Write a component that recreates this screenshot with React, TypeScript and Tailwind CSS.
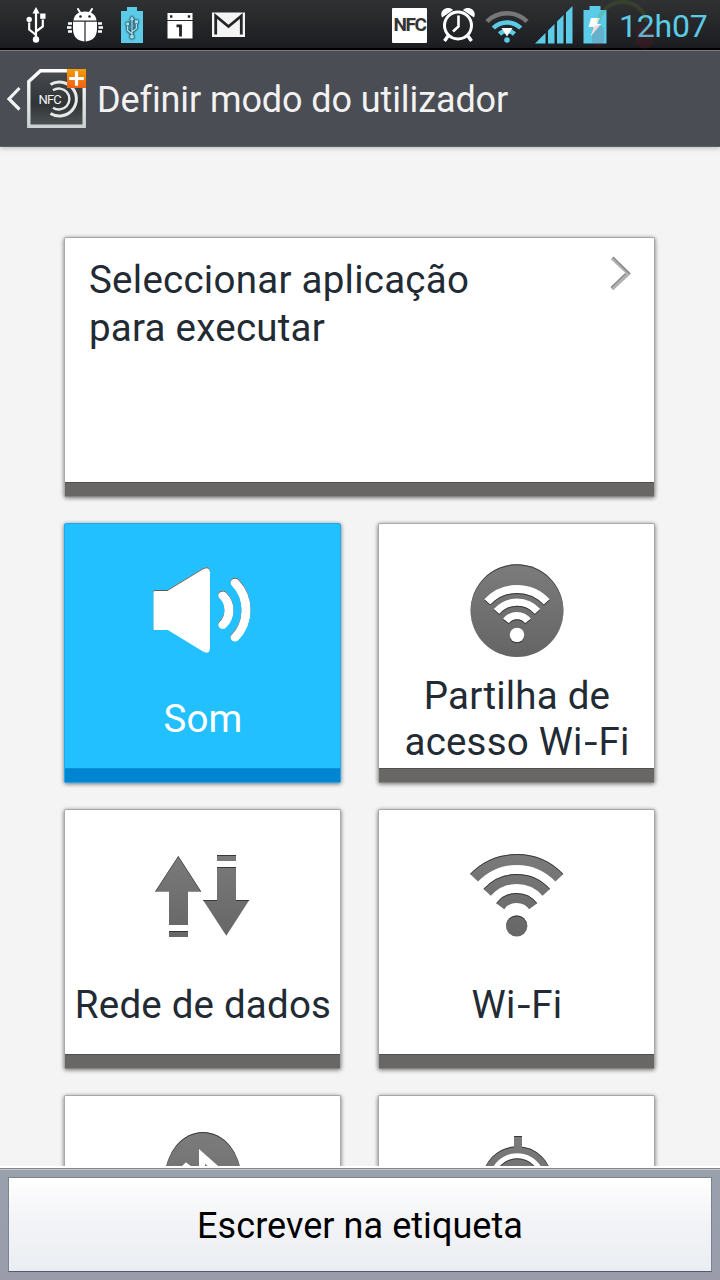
import React from 'react';

interface Tile {
    id: string;
    label?: string;
    icon: React.ReactNode;
    active?: boolean;
}

const UsbGlyph: React.FC<{ className?: string }> = ({ className }) => (
    <svg viewBox="0 0 20 36" className={className} fill="none" stroke="currentColor" strokeWidth="2.2">
        <path d="M10 4v28M10 28L3.2 22.5v-7M10 24.5l6.8-5v-7" />
        <path d="M10 0l3.6 6.5H6.4z" fill="currentColor" stroke="none" />
        <circle cx="10" cy="32.5" r="3.2" fill="currentColor" stroke="none" />
        <circle cx="3.2" cy="12.5" r="2.7" fill="currentColor" stroke="none" />
        <path d="M14.2 6.5h5.3v5.3h-5.3z" fill="currentColor" stroke="none" />
    </svg>
);

const BugIcon = () => (
    <svg viewBox="0 0 36 34" className="h-[34px] w-9" fill="#fff">
        <path d="M11 1l3 5M25 1l-3 5" stroke="#fff" strokeWidth="2" strokeLinecap="round" />
        <path d="M6.5 12.500C7 6.500 12 3.500 18 3.500S29 6.500 29.500 12.500z" />
        <circle cx="13.500" cy="8.500" r="1.300" fill="#222" />
        <circle cx="22.500" cy="8.500" r="1.300" fill="#222" />
        <path d="M6 13.800h11.400v19.700C10 33 6 28 6 21zM18.600 13.800H30V21c0 7-4 12-11.400 12.500z" />
        <path d="M1 15.500h4M0 19.500h4.500M1 23.500h4M31 15.500h4M31.500 19.500H36M31 23.500h4" stroke="#fff" strokeWidth="2.600" />
    </svg>
);

const CalendarIcon = () => (
    <svg viewBox="0 0 26 26" className="h-[26px] w-[26px]">
        <path d="M.5 0h25v7H.5zM.5 8h25v17.500H.5z" fill="#fff" />
        <path d="M3 2.300h2.400v2.400H3zM20.800 2.300h2.400v2.400h-2.400z" fill="#222" />
        <path d="M9.500 12.800h4V23.500" fill="none" stroke="#222" strokeWidth="2.800" />
    </svg>
);

const GmailIcon = () => (
    <svg viewBox="0 0 34 26" className="h-[26px] w-[34px]">
        <path d="M0 .5h33v24.500H0z" fill="#f4f4f4" />
        <path d="M3.700 22.500V4l12.800 10.500L29.300 4v18.500" fill="none" stroke="#242527" strokeWidth="2.800" />
    </svg>
);

const AlarmIcon = () => (
    <svg viewBox="0 0 36 36" className="h-9 w-9" fill="none" stroke="#fff">
        <circle cx="18" cy="18.500" r="13.500" strokeWidth="3" />
        <path d="M18.500 8.500v11l-5.500 5" strokeWidth="2.600" />
        <path d="M8 29l-3.500 5M28 29l3.500 5" strokeWidth="3.400" />
        <path d="M2 10.500C-1.500 3 8 -2 13 3zM34 10.500C37.500 3 28 -2 23 3z" fill="#fff" stroke="none" />
    </svg>
);

const StatusWifiIcon = () => (
    <svg viewBox="0 0 44 36" className="h-9 w-11" fill="none" strokeWidth="4.500">
        <path d="M2 14.500a28.500 28.500 0 0 1 40 0" stroke="#777" />
        <path d="M8.300 21a19.500 19.500 0 0 1 27.400 0" stroke="#5bcbe7" />
        <path d="M14.500 27a11 11 0 0 1 15 0" stroke="#5bcbe7" />
        <path d="M16.500 21h11L22 29.500z" fill="#fff" />
        <circle cx="22" cy="33" r="2.800" fill="#5bcbe7" />
    </svg>
);

const SignalIcon = () => (
    <svg viewBox="0 0 38 38" className="h-[38px] w-[38px]" fill="#5bcbe7">
        <path d="M0 37.500L10.500 27v10.500zM13 24.500l6.500-6.500v19.500H13zM22 15.500l6.500-6.500v28.500H22zM31 6.500L37.500 0v37.500H31z" />
    </svg>
);

const BatteryIcon = () => (
    <svg viewBox="0 0 24 38" className="h-[38px] w-6">
        <path d="M6.500 0h11v4H23.500v33.500H.5V4h6z" fill="#5bcbe7" />
        <path d="M8 12h9l-3 6h4L8 30l2.500-9H5.500z" fill="#fff" />
    </svg>
);

const Watermark = () => (
    <svg viewBox="0 0 150 60" className="pointer-events-none absolute top-0 right-0 z-20 h-[60px] w-[150px]">
        <path d="M28 22c3-12 13-20 25-20s21 8 24 20" fill="none" stroke="#5a8a20" strokeOpacity=".2" strokeWidth="4" />
        <path d="M22 28q6-6 12 0v14l-6 6-6-6zM66 28q8-6 17 0v16l-8 6-9-6z" fill="#a01020" fillOpacity=".14" />
    </svg>
);

const StatusBar = () => (
    <div className="relative flex h-[50px] shrink-0 items-center border-b-2 border-black bg-gradient-to-b from-[#303133] to-[#1c1d20] pt-0.5">
        <Watermark />
        <UsbGlyph className="ml-[26px] h-9 w-5 text-white" />
        <div className="ml-[21px]"><BugIcon /></div>
        <div className="ml-[18px] flex h-9 w-[22px] flex-col items-center">
            <div className="h-1 w-2.5 bg-[#5bcbe7]" />
            <div className="flex w-full flex-1 items-center justify-center bg-[#5bcbe7]">
                <UsbGlyph className="h-[23px] w-[14px] text-[#a5deee] [filter:drop-shadow(0_0_1px_#10303a)_drop-shadow(0_0_0.5px_#10303a)]" />
            </div>
        </div>
        <div className="ml-[24px] mt-0.5"><CalendarIcon /></div>
        <div className="ml-[19px]"><GmailIcon /></div>
        <div className="relative ml-auto flex items-center">
            <div className="flex h-[35px] w-[35px] items-center justify-center rounded-[1px] bg-white">
                <span className="font-[Roboto] text-[19px] font-bold tracking-[-1.4px] text-[#333]">NFC</span>
            </div>
            <div className="ml-[13px]"><AlarmIcon /></div>
            <div className="ml-[9px]"><StatusWifiIcon /></div>
            <div className="ml-[6px]"><SignalIcon /></div>
            <div className="ml-[10px]"><BatteryIcon /></div>
            <span className="ml-[12px] mr-[12px] mt-0.5 w-[89px] font-[Roboto] text-[32px] leading-none tracking-[-0.2px] text-[#5bcbe7]">12h07</span>
        </div>
    </div>
);

const AppIcon = () => (
    <svg viewBox="0 0 62 62" className="h-[62px] w-[62px]">
        <defs>
            <linearGradient id="paper" x1="0" y1="0" x2="0" y2="1">
                <stop offset="0" stopColor="#484c4f" />
                <stop offset=".6" stopColor="#303436" />
                <stop offset="1" stopColor="#4d5356" />
            </linearGradient>
            <linearGradient id="frame" x1="0" y1="0" x2="0" y2="1">
                <stop offset="0" stopColor="#ffffff" />
                <stop offset="1" stopColor="#ccd2d3" />
            </linearGradient>
            <linearGradient id="orange" x1="0" y1="0" x2="0" y2="1">
                <stop offset="0" stopColor="#f79b00" />
                <stop offset="1" stopColor="#ee6119" />
            </linearGradient>
        </defs>
        <path d="M2.800 13.500L14.500 2.800H58.200V58.200H2.800z" fill="url(#paper)" stroke="url(#frame)" strokeWidth="3.400" />
        <g fill="none" stroke="#e8eaea">
            <path d="M24.500 16.500a17 17 0 1 1 0 29" strokeWidth="3" />
            <path d="M27 22.300a10.500 10.500 0 1 1 0 17.400" strokeWidth="2.400" />
        </g>
        <text x="12.500" y="35.500" fontSize="13" fontFamily="Roboto, sans-serif" letterSpacing="-.8" fill="#f2f2f2" stroke="#33373a" strokeWidth="1" paintOrder="stroke">NFC</text>
        <path d="M41 1h19v19H41z" fill="url(#orange)" />
        <path d="M50.500 3.300v14.500M43.200 10.500h14.600" stroke="#fff" strokeWidth="3.200" />
    </svg>
);

const ActionBar = () => (
    <header className="relative z-10 flex h-[97px] shrink-0 items-center border-t border-[#7b7d80] border-b border-b-[#5d6064] bg-[#4a4d54] shadow-[0_1px_5px_rgba(0,0,0,0.25)]">
        <svg viewBox="0 0 15 26" className="ml-1.5 h-[26px] w-[15px]">
            <path d="M13.500 2L3 13l10.500 10.500" fill="none" stroke="#f2f2f2" strokeWidth="3.200" />
        </svg>
        <div className="ml-[5px]"><AppIcon /></div>
        <h1 className="mt-0.5 ml-[9px] font-[Roboto] text-[36px] leading-none tracking-[-0.1px] whitespace-nowrap text-[#f2f2f2]">
            Definir modo do utilizador
        </h1>
    </header>
);

// Shared gradient and inner top shadow used by every tile icon
const IconDefs = () => (
    <svg className="absolute h-0 w-0">
        <defs>
            <linearGradient id="grey" gradientUnits="userSpaceOnUse" x1="0" y1="8" x2="0" y2="98">
                <stop offset="0" stopColor="#7b7b7b" />
                <stop offset="1" stopColor="#656565" />
            </linearGradient>
            <filter id="inset" x="-20%" y="-20%" width="140%" height="140%" colorInterpolationFilters="sRGB">
                <feOffset in="SourceAlpha" dy="1.200" result="off" />
                <feGaussianBlur in="off" stdDeviation=".6" result="blur" />
                <feComposite in="SourceAlpha" in2="blur" operator="out" result="edge" />
                <feFlood floodColor="#222" floodOpacity=".75" />
                <feComposite in2="edge" operator="in" result="shade" />
                <feMerge>
                    <feMergeNode in="SourceGraphic" />
                    <feMergeNode in="shade" />
                </feMerge>
            </filter>
        </defs>
    </svg>
);

const TileIcon: React.FC<{ children: React.ReactNode }> = ({ children }) => (
    <svg viewBox="0.5 0 100 100" className="h-[100px] w-[100px]">
        <g filter="url(#inset)">{children}</g>
    </svg>
);

const SoundIcon = () => (
    <TileIcon>
        <path
            d="M2.300 32h12.500L50.500 10.200Q57.500 7 57.500 14V90q0 7-7 3.500L15.300 72h-13q-1.500 0-1.500-1.500v-37Q.8 32 2.300 32z"
            fill="#fff"
        />
        <g fill="none" stroke="#fff" strokeWidth="9.200" strokeLinecap="round">
            <path d="M70.200 37a20.200 20.200 0 0 1 0 29.300" />
            <path d="M82.500 24.300a39.400 39.400 0 0 1 0 54.700" />
        </g>
    </TileIcon>
);

const HotspotIcon = () => (
    <TileIcon>
        <mask id="hotspot">
            <path d="M0 0h100v100H0z" fill="#fff" />
            <g fill="none" stroke="#000">
                <path d="M20.800 43.900a40.500 40.500 0 0 1 59.400 0" strokeWidth="8" />
                <path d="M30 53.500a27.200 27.200 0 0 1 41 0" strokeWidth="7.300" />
                <path d="M39.500 63a13.900 13.900 0 0 1 22 0" strokeWidth="7.300" />
            </g>
            <circle cx="50.500" cy="77" r="7.300" fill="#000" />
        </mask>
        <circle cx="50.500" cy="52.700" r="46.400" fill="url(#grey)" mask="url(#hotspot)" />
    </TileIcon>
);

const DataIcon = () => (
    <TileIcon>
        <g fill="url(#grey)">
            <path d="M25.800 12l23 35.700H35.500V81h-19V47.700h-14z" />
            <path d="M16.500 87h19v6h-19zM64.500 11h19v6h-19z" />
            <path d="M64.500 23h19v33h13.300l-23 35.700L50.500 56h14z" />
        </g>
    </TileIcon>
);

const WifiIcon = () => (
    <TileIcon>
        <g fill="none" stroke="url(#grey)">
            <path d="M7.500 33.800a59 59 0 0 1 85.400 0" strokeWidth="11" />
            <path d="M20.600 48.400a39.500 39.500 0 0 1 59.200 0" strokeWidth="10" />
            <path d="M33.700 62.300a20.500 20.500 0 0 1 33 0" strokeWidth="10" />
        </g>
        <circle cx="50.200" cy="82" r="10.600" fill="url(#grey)" />
    </TileIcon>
);

const BluetoothIcon = () => (
    <TileIcon>
        <ellipse cx="50.500" cy="48" rx="38" ry="46" fill="url(#grey)" />
        <path
            d="M46.500 19L69 39 56 49l13 10-22.500 20V56L33 67l-4.500-4.500L43.500 49 28.500 37l5-4.700 13 10.200zM52.500 33.700v9L58 38.500zM52.500 56v10l5.500-5z"
            fill="#fff"
            fillRule="evenodd"
        />
    </TileIcon>
);

const LocationIcon = () => (
    <TileIcon>
        <circle cx="50.700" cy="51.300" r="31.500" fill="none" stroke="url(#grey)" strokeWidth="7" />
        <circle cx="50.700" cy="51.300" r="23" fill="url(#grey)" />
        <path d="M47.500 6h8v12h-8z" fill="url(#grey)" />
    </TileIcon>
);

const tiles: Tile[] = [
    { id: 'sound', label: 'Som', icon: <SoundIcon />, active: true },
    { id: 'hotspot', label: 'Partilha de acesso Wi-Fi', icon: <HotspotIcon /> },
    { id: 'data', label: 'Rede de dados', icon: <DataIcon /> },
    { id: 'wifi', label: 'Wi-Fi', icon: <WifiIcon /> },
    { id: 'bluetooth', icon: <BluetoothIcon /> },
    { id: 'location', icon: <LocationIcon /> },
];

// Hyphens get a little air and stay glued to their word
const TileLabel: React.FC<{ text: string }> = ({ text }) => (
    <span className="text-center font-[Roboto] text-[38.5px] leading-[46px] tracking-[0.2px]">
        {text.split(' ').map((word, i) => {
            const [head, tail] = word.split('-');
            return (
                <React.Fragment key={word}>
                    {i > 0 && ' '}
                    <span className="whitespace-nowrap">
                        {head}
                        {tail && <span className="inline-block origin-center scale-x-125 px-[2.5px]">-</span>}
                        {tail}
                    </span>
                </React.Fragment>
            );
        })}
    </span>
);

const SettingTile: React.FC<{ tile: Tile }> = ({ tile }) => (
    <button
        className={
            'flex h-[260px] w-[277px] flex-col items-center rounded-[2px] border shadow-[0_1px_4px_rgba(0,0,0,0.55)] ' +
            (tile.active
                ? 'border-[#1ba9f5] bg-[#23c0ff] text-white'
                : 'border-[#a9a9a9] border-b-[#858583] bg-white text-[#222a33]')
        }
    >
        <div className="mt-[34px]">{tile.icon}</div>
        <div className="mt-3.5 flex h-[94px] w-[264px] shrink-0 items-center justify-center pl-px">
            {tile.label && <TileLabel text={tile.label} />}
        </div>
        <div
            className={
                'mt-auto h-[14px] w-full shrink-0 border-t ' +
                (tile.active ? 'border-[#0a93dc] bg-[#0085d0]' : 'border-[#50504e] bg-[#686765]')
            }
        />
    </button>
);

export default function App() {
    return (
        <div className="flex h-[1280px] w-[720px] flex-col overflow-hidden bg-[#f4f4f4]">
            <IconDefs />
            <StatusBar />
            <ActionBar />

            <main className="flex h-[1019px] shrink-0 flex-col gap-[26px] overflow-hidden px-[64px] pt-[90px]">
                <button className="flex h-[260px] w-[591px] shrink-0 flex-col rounded-[2px] border border-[#a9a9a9] border-b-[#858583] bg-white text-left shadow-[0_1px_4px_rgba(0,0,0,0.55)]">
                    <div className="flex w-full justify-between pt-[18px] pr-[22px] pl-[24px]">
                        <span className="w-[400px] font-[Roboto] text-[38.5px] leading-[48px] tracking-[0.25px] text-[#222a33]">
                            Seleccionar aplicação para executar
                        </span>
                        <svg viewBox="0 0 22 34" className="h-[34px] w-[22px]">
                            <path d="M2 2l16.500 15.500L2 33" fill="none" stroke="#b0b0b0" strokeWidth="3.600" />
                            <path d="M3 1l16.500 16.500M1 31.500L15.500 17.500" fill="none" stroke="#858585" strokeWidth="1.200" />
                        </svg>
                    </div>
                    <div className="mt-auto h-[14px] w-full border-t border-[#50504e] bg-[#686765]" />
                </button>

                <div className="grid grid-cols-[277px_277px] gap-x-[37px] gap-y-[26px]">
                    {tiles.map((tile) => (
                        <SettingTile key={tile.id} tile={tile} />
                    ))}
                </div>
            </main>

            <footer className="h-[114px] shrink-0 border-t-2 border-white">
                <div className="h-full border-t border-[#85878a] bg-gradient-to-b from-[#99a1ad] to-[#9a9cab]">
                    <div className="h-full border-t border-[#c5c7ca] px-2 pt-[7px]">
                        <button className="flex h-[95px] w-[704px] items-center justify-center border border-[#7b838f] border-b-[#555b66] bg-gradient-to-b from-white via-[#f2f3f6] to-[#eaeef2] pt-0.5 font-[Roboto] text-[36px] leading-none tracking-[0.05px] text-black">
                            Escrever na etiqueta
                        </button>
                    </div>
                </div>
            </footer>
        </div>
    );
}
